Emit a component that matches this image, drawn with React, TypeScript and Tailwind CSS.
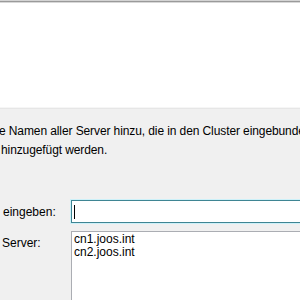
export default function App() {
  return (
    <div className="h-[300px] w-[300px] overflow-hidden bg-[#f0f0f0] font-['Liberation_Sans',Arial,sans-serif] text-[12px] text-black">
      <div className="h-[1px] bg-[#d4d4d4]" />
      <div className="h-[1px] bg-[#9a9a9a]" />
      <div className="h-[1px] bg-[#d8d8d8]" />
      <div className="h-[104px] bg-white" />
      <div className="h-[1px] bg-[#f6f6f6]" />
      <div className="h-[1px] bg-[#e6e6e6]" />

      <div className="mt-[13px] whitespace-nowrap leading-[19px] tracking-[-0.1px]">
        <div className="ml-[-1px]">e Namen aller Server hinzu, die in den Cluster eingebunde</div>
        <div className="ml-[1px]">hinzugefügt werden.</div>
      </div>

      <div className="mt-[40px] flex items-center">
        <div className="w-[71px] shrink-0 pl-[3px]">eingeben:</div>
        <div className="h-[23px] w-[240px] shrink-0 border border-[#3f8593] bg-white shadow-[0_0_0_1px_#cdf1f9]">
          <div className="ml-[2px] mt-[4px] h-[14px] w-[1px] bg-black" />
        </div>
      </div>

      <div className="mt-[8px] flex">
        <div className="w-[71px] shrink-0 pl-[2px] pt-[3px]">Server:</div>
        <div className="h-[80px] w-[240px] shrink-0 border border-[#abadb3] bg-white pl-[2px] pt-[1px] leading-[13px]">
          <div>cn1.joos.int</div>
          <div>cn2.joos.int</div>
        </div>
      </div>
    </div>
  );
}
